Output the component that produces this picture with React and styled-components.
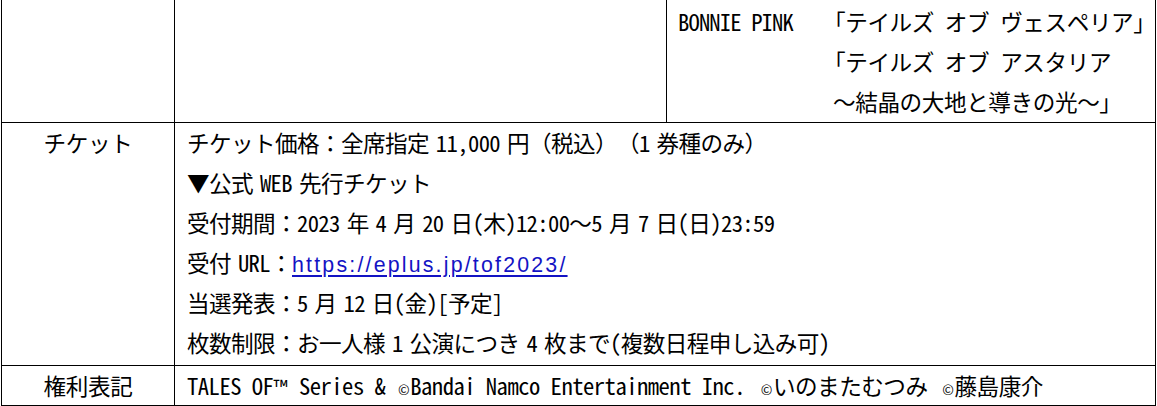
import React from "react";
import styled, { createGlobalStyle } from "styled-components";

const a = "\u2004";

const Global = createGlobalStyle`
  html, body { margin: 0; padding: 0; background: #fff; }
  body {
    font-family: "Noto Sans Mono CJK JP", "Noto Sans CJK JP", "Liberation Mono", monospace;
    color: #000;
    text-spacing-trim: space-all;
    text-autospace: no-autospace;
  }
`;

const Sheet = styled.div`
  margin-left: 1px;
  width: 1155px;
  box-sizing: border-box;
  border-left: 1px solid #000;
  border-right: 1px solid #000;
  display: grid;
  grid-template-columns: 173px 1fr;
  grid-template-rows: 123px 243px 40px;
  font-size: 22.6px;
  letter-spacing: -0.4px;
`;

const Label = styled.div`
  border-right: 1px solid #000;
  border-bottom: 1px solid #000;
  text-align: center;
  line-height: ${(p) => p.$lh || 40}px;
  white-space: pre;
`;

const Content = styled.div`
  border-bottom: 1px solid #000;
  padding-left: 12px;
  line-height: ${(p) => p.$lh || 40}px;
  letter-spacing: ${(p) => (p.$ls != null ? p.$ls : -0.6)}px;
`;

const Line = styled.div`
  white-space: pre;
  height: 40px;
`;

const Split = styled.div`
  display: grid;
  grid-template-columns: 492px 1fr;
  border-bottom: 1px solid #000;
`;

const SplitBlank = styled.div`
  border-right: 1px solid #000;
`;

const Credits = styled.div`
  display: flex;
  padding: 2px 0 0 11px;
  line-height: 40px;
`;

const Artist = styled.div`
  flex: none;
  width: 145px;
  white-space: pre;
  letter-spacing: -0.85px;
`;

const Titles = styled.div`
  white-space: pre;
`;

const TitleLine = styled.div`
  padding-left: ${(p) => p.$indent || 0}px;
`;

const Mark = styled.span`
  font-size: ${(p) => p.$size || 22.6}px;
  margin-left: ${(p) => p.$gap || 0}px;
  letter-spacing: 0.5px;
`;

const Link = styled.a`
  color: #1313c4;
  text-decoration: underline;
  text-underline-offset: 3px;
  font-family: "Liberation Sans", Arial, sans-serif;
  font-size: 21.33px;
  letter-spacing: 2.2px;
`;

export default function App() {
  return (
    <>
      <Global />
      <Sheet>
        <Label />
        <Split>
          <SplitBlank />
          <Credits>
            <Artist>BONNIE PINK</Artist>
            <Titles>
              <TitleLine>「テイルズ オブ ヴェスペリア」</TitleLine>
              <TitleLine>「テイルズ オブ アスタリア</TitleLine>
              <TitleLine $indent={10}>～結晶の大地と導きの光～」</TitleLine>
            </Titles>
          </Credits>
        </Split>

        <Label>チケット</Label>
        <Content>
          <Line>{`チケット価格：全席指定${a}11,000${a}円（税込）（1${a}券種のみ）`}</Line>
          <Line>{`▼公式${a}WEB${a}先行チケット`}</Line>
          <Line>{`受付期間：2023${a}年${a}4${a}月${a}20${a}日(木)12:00～5${a}月${a}7${a}日(日)23:59`}</Line>
          <Line>
            {`受付${a}URL：`}
            <Link href="https://eplus.jp/tof2023/">https://eplus.jp/tof2023/</Link>
          </Line>
          <Line>{`当選発表：5${a}月${a}12${a}日(金)[予定]`}</Line>
          <Line>{`枚数制限：お一人様${a}1${a}公演につき${a}4${a}枚まで(複数日程申し込み可)`}</Line>
        </Content>

        <Label $lh={39}>権利表記</Label>
        <Content $lh={39} $ls={-0.5}>
          <Line>
            TALES OF<Mark $size={20}>™</Mark> Series &amp; <Mark $size={14} $gap={2}>©</Mark>Bandai Namco Entertainment Inc. <Mark $size={14} $gap={5}>©</Mark>いのまたむつみ <Mark $size={14} $gap={4}>©</Mark>藤島康介
          </Line>
        </Content>
      </Sheet>
    </>
  );
}
